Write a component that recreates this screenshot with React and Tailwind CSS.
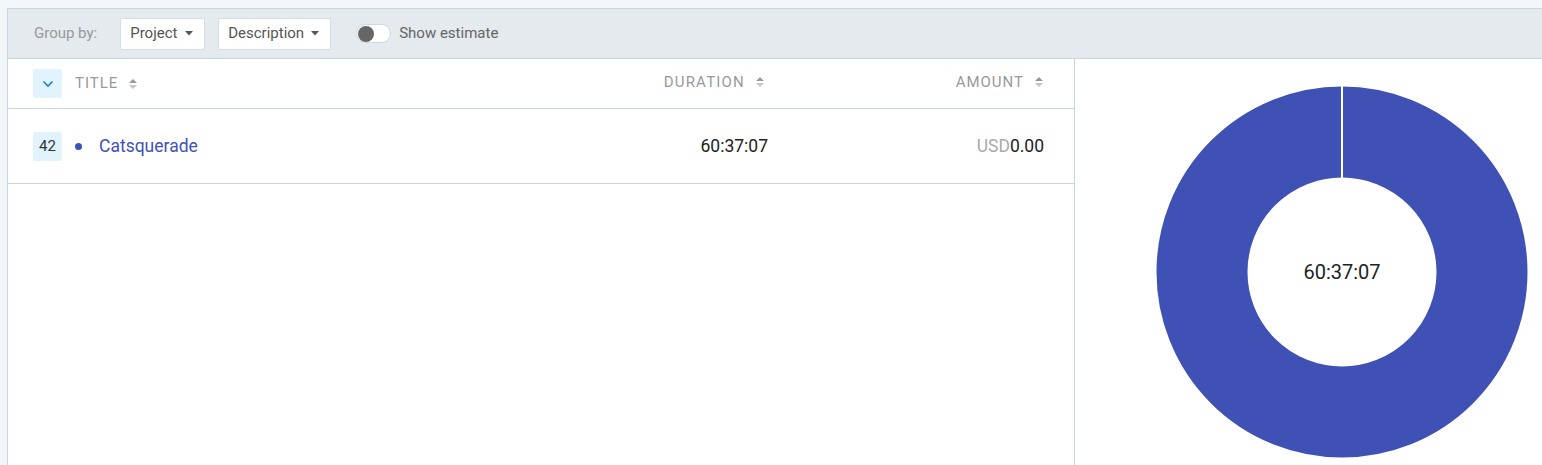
import React from 'react'

function SortIcon() {
    return (
        <svg width="10" height="12" viewBox="0 0 10 12" className="ml-[10px]">
            <path d="M1 5 L5 1 L9 5 Z" fill="#999" />
            <path d="M1 7 L5 11 L9 7 Z" fill="#c6c6c6" />
        </svg>
    )
}

function Caret() {
    return (
        <svg width="8" height="5" viewBox="0 0 8 5" className="ml-auto">
            <path d="M0 0 L8 0 L4 4.5 Z" fill="#555" />
        </svg>
    )
}

function Donut() {
    return (
        <div className="relative w-[372px] h-[372px]">
            <svg width="372" height="372" viewBox="0 0 372 372">
                <circle cx="186" cy="186" r="140" fill="none" stroke="#3f51b5" strokeWidth="91" />
                <line x1="186" y1="0" x2="186" y2="92" stroke="#ffffff" strokeWidth="2" />
            </svg>
            <div className="absolute inset-0 flex items-center justify-center text-[20px] text-[#222]">60:37:07</div>
        </div>
    )
}

export default function App() {
    return (
        <div className="h-[465px] bg-[#f2f6f8] pt-[8px] pl-[7px] overflow-hidden" style={{ fontFamily: 'Roboto, "Liberation Sans", sans-serif' }}>
            <div className="h-full border-l border-t border-[#c6d6de] bg-white flex flex-col">
                <div className="h-[50px] bg-[#e4eaee] border-b border-[#c6d6de] flex items-center pl-[26px] shrink-0">
                    <div className="text-[15px] text-[#999] mr-[23px]">Group by:</div>
                    <div className="w-[85px] h-[32px] flex items-center pl-[9px] pr-[11px] bg-white border border-[#d7dee2] rounded-[2px] text-[15px] text-[#555] mr-[13px]">
                        Project<Caret />
                    </div>
                    <div className="w-[113px] h-[32px] flex items-center pl-[9px] pr-[11px] bg-white border border-[#d7dee2] rounded-[2px] text-[15px] text-[#555] mr-[25px]">
                        Description<Caret />
                    </div>
                    <div className="w-[35px] h-[19px] rounded-full bg-white border border-[#cfd8dc] flex items-center px-[1px] mr-[8px]">
                        <div className="w-[16px] h-[16px] rounded-full bg-[#666]" />
                    </div>
                    <div className="text-[15px] text-[#666]">Show estimate</div>
                </div>
                <div className="flex flex-1">
                    <div className="w-[1067px] border-r border-[#c6d6de] flex flex-col">
                        <div className="h-[50px] border-b border-[#c6d6de] flex items-center pl-[25px] pr-[30px]">
                            <div className="w-[29px] h-[29px] bg-[#e1f4fd] rounded-[2px] flex items-center justify-center">
                                <svg width="12" height="8" viewBox="0 0 12 8">
                                    <path d="M1.5 1.5 L6 6 L10.5 1.5" fill="none" stroke="#1a7fc1" strokeWidth="1.6" />
                                </svg>
                            </div>
                            <div className="flex items-center ml-[13px] text-[15px] tracking-[1px] text-[#999] flex-1">TITLE<SortIcon /></div>
                            <div className="flex items-center text-[15px] tracking-[1.2px] text-[#999] mb-[3px] mr-[3px]">DURATION<SortIcon /></div>
                            <div className="flex items-center text-[15px] tracking-[1px] text-[#999] mb-[3px] w-[276px] justify-end">AMOUNT<SortIcon /></div>
                        </div>
                        <div className="h-[75px] border-b border-[#c6d6de] flex items-center pl-[25px] pr-[30px]">
                            <div className="w-[29px] h-[29px] bg-[#e1f4fd] rounded-[2px] flex items-center justify-center text-[15px] text-[#333]">42</div>
                            <div className="w-[7px] h-[7px] rounded-full bg-[#3f51b5] ml-[13px]" />
                            <div className="ml-[17px] text-[17.5px] text-[#3f51b5] flex-1">Catsquerade</div>
                            <div className="text-[17.5px] text-[#222]">60:37:07</div>
                            <div className="w-[276px] text-right text-[17.5px] text-[#222]"><span className="text-[#aaa]">USD</span>0.00</div>
                        </div>
                    </div>
                    <div className="flex-1 pt-[27px] pl-[81px]">
                        <Donut />
                    </div>
                </div>
            </div>
        </div>
    )
}
